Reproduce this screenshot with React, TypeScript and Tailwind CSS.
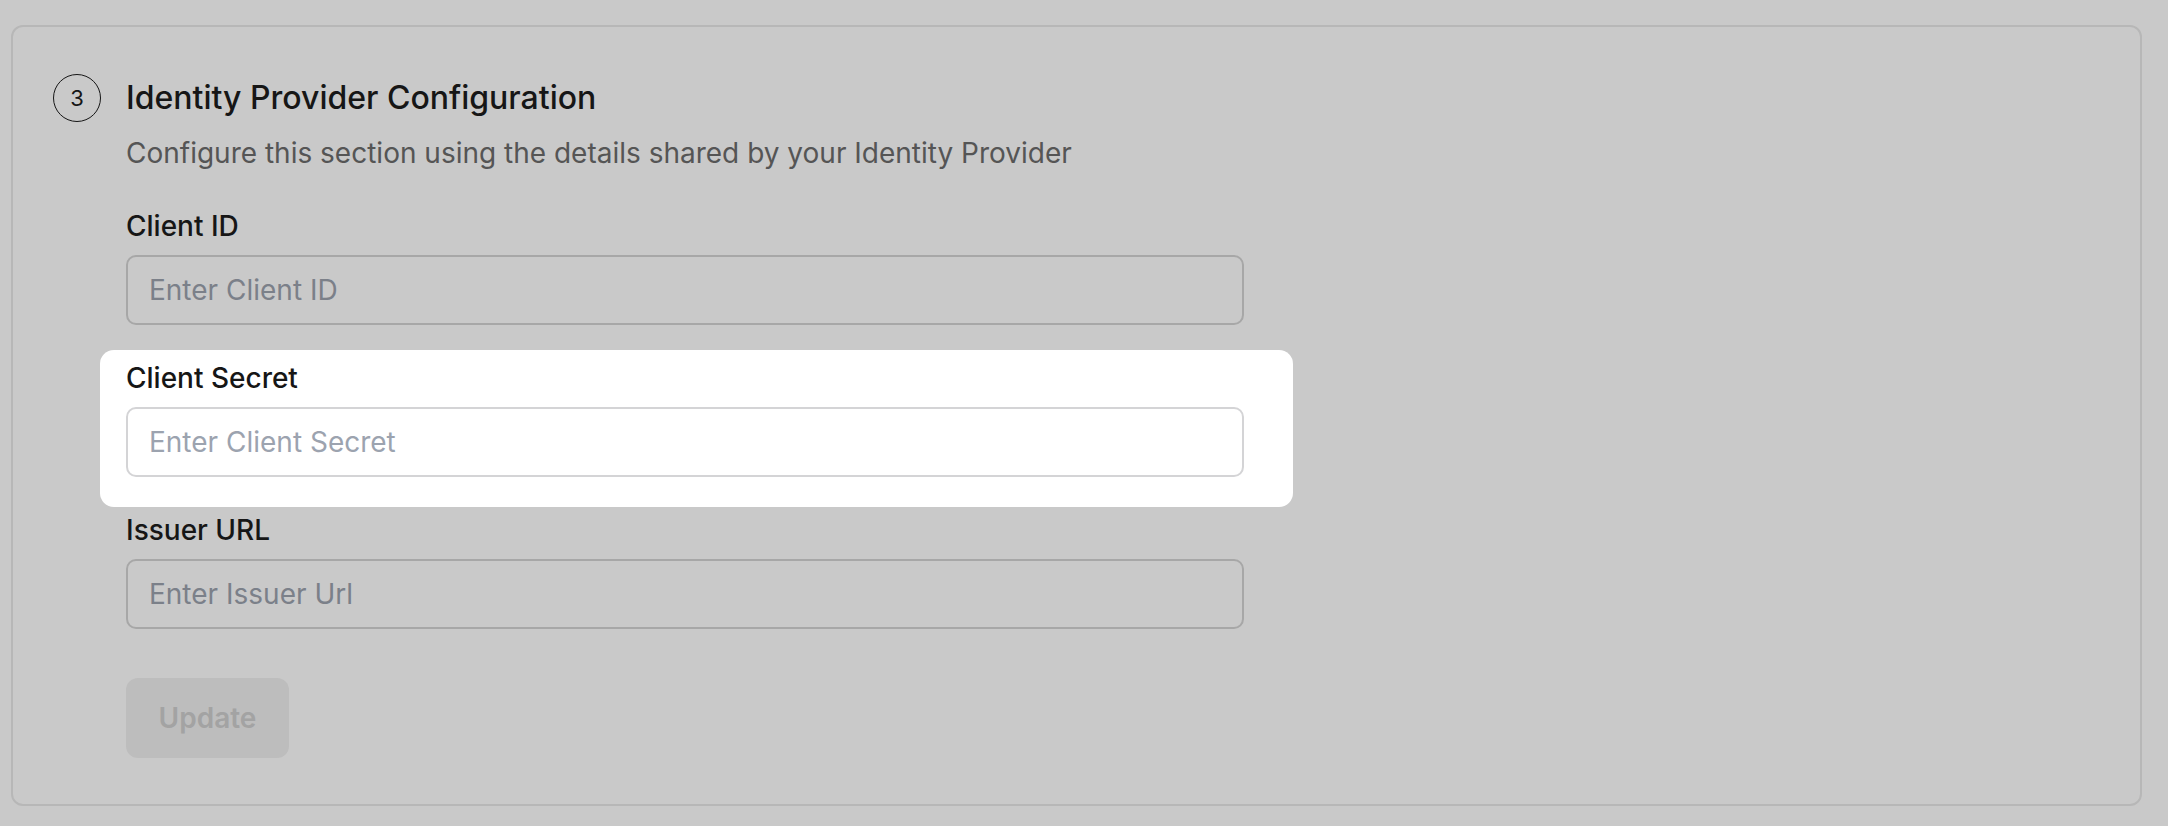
const fields = [
  { label: "Client ID", placeholder: "Enter Client ID", active: false },
  { label: "Client Secret", placeholder: "Enter Client Secret", active: true },
  { label: "Issuer URL", placeholder: "Enter Issuer Url", active: false },
];

const Field = ({
  label,
  placeholder,
  active,
}: {
  label: string;
  placeholder: string;
  active: boolean;
}) => (
  <div>
    <label className="block text-[28px] leading-[42px] font-medium text-[#161616]">
      {label}
    </label>
    <input
      type="text"
      placeholder={placeholder}
      className={
        active
          ? "mt-[8px] block w-[1118px] h-[70px] rounded-[10px] border-2 border-[#d4d4d6] bg-white pl-[21px] text-[28px] outline-none placeholder:text-[#9ca3af]"
          : "mt-[8px] block w-[1118px] h-[70px] rounded-[10px] border-2 border-[#a7a7a7] bg-transparent pl-[21px] text-[28px] outline-none placeholder:text-[#7b8089]"
      }
    />
  </div>
);

export default function App() {
  return (
    <div
      className="min-h-screen bg-[#c9c9c9] pt-[25px] pl-[11px]"
      style={{ fontFamily: "Inter, 'Noto Sans', sans-serif" }}
    >
      <div className="w-[2131px] rounded-[12px] border-2 border-[#b7b7b7] pl-[40px] pt-[47px] pb-[46px]">
        <div className="flex items-center gap-[25px]">
          <div className="flex h-[48px] w-[48px] items-center justify-center rounded-full border-[1.5px] border-[#161616] text-[22px] text-[#161616]">
            3
          </div>
          <h2 className="text-[32px] leading-[42px] font-medium text-[#161616]">
            Identity Provider Configuration
          </h2>
        </div>
        <div className="ml-[73px]">
          <p className="mt-[10px] text-[28px] leading-[42px] text-[#555555]">
            Configure this section using the details shared by your Identity
            Provider
          </p>
          <div className="mt-[31px]">
            <Field {...fields[0]} />
          </div>
          <div className="mt-[25px] -ml-[26px] w-[1193px] rounded-[14px] bg-white pl-[26px] pt-[7px] pb-[30px]">
            <Field {...fields[1]} />
          </div>
          <div className="mt-[2px]">
            <Field {...fields[2]} />
          </div>
          <button
            disabled
            className="mt-[49px] h-[80px] w-[163px] rounded-[12px] bg-[#bdbdbd] text-[28px] font-semibold text-[#a3a3a3]"
          >
            Update
          </button>
        </div>
      </div>
    </div>
  );
}
